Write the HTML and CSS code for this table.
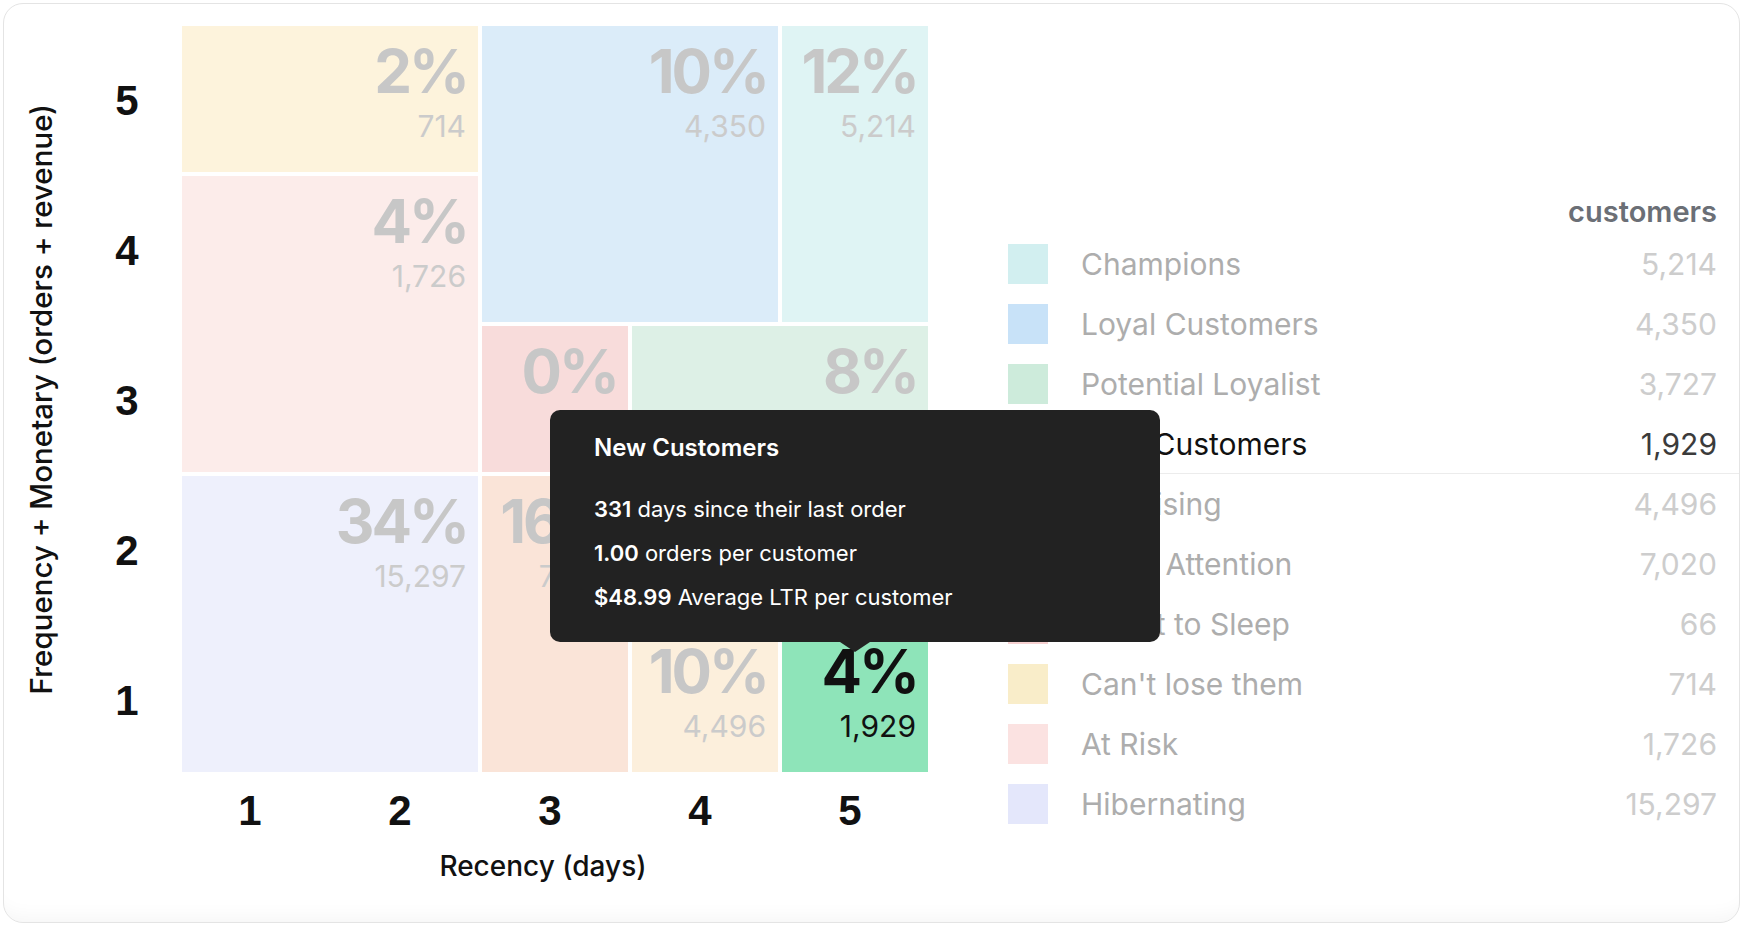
FILE: index.html
```html
<!DOCTYPE html>
<html lang="en">
<head>
<meta charset="utf-8">
<title>RFM Segments</title>
<link rel="stylesheet" href="styles.css">
</head>
<body>
<div class="card">
  <div class="chart">
    <div class="y-title"><span>Frequency + Monetary (orders + revenue)</span></div>
    <div class="y-ticks">
      <div class="tick">5</div>
      <div class="tick">4</div>
      <div class="tick">3</div>
      <div class="tick">2</div>
      <div class="tick">1</div>
    </div>
    <div class="plot">
      <div class="cell c-cant"><div class="pct">2%</div><div class="cnt">714</div></div>
      <div class="cell c-risk"><div class="pct">4%</div><div class="cnt">1,726</div></div>
      <div class="cell c-hib"><div class="pct">34%</div><div class="cnt">15,297</div></div>
      <div class="cell c-loyal"><div class="pct">10%</div><div class="cnt">4,350</div></div>
      <div class="cell c-champ"><div class="pct">12%</div><div class="cnt">5,214</div></div>
      <div class="cell c-sleep"><div class="pct">0%</div><div class="cnt">66</div></div>
      <div class="cell c-pot"><div class="pct">8%</div><div class="cnt">3,727</div></div>
      <div class="cell c-need"><div class="pct">16%</div><div class="cnt">7,020</div></div>
      <div class="cell c-prom"><div class="pct">10%</div><div class="cnt">4,496</div></div>
      <div class="cell c-new active"><div class="pct">4%</div><div class="cnt">1,929</div></div>
      <div class="tooltip">
        <div class="tt-title">New Customers</div>
        <div class="tt-line"><b>331</b> days since their last order</div>
        <div class="tt-line"><b>1.00</b> orders per customer</div>
        <div class="tt-line"><b>$48.99</b> Average LTR per customer</div>
      </div>
    </div>
    <div class="x-ticks">
      <div class="tick">1</div>
      <div class="tick">2</div>
      <div class="tick">3</div>
      <div class="tick">4</div>
      <div class="tick">5</div>
    </div>
    <div class="x-title">Recency (days)</div>
  </div>
  <div class="legend">
    <div class="legend-head">customers</div>
    <div class="row"><span class="sw s-champ"></span><span class="name">Champions</span><span class="val">5,214</span></div>
    <div class="row"><span class="sw s-loyal"></span><span class="name">Loyal Customers</span><span class="val">4,350</span></div>
    <div class="row"><span class="sw s-pot"></span><span class="name">Potential Loyalist</span><span class="val">3,727</span></div>
    <div class="row active"><span class="sw s-new"></span><span class="name">New Customers</span><span class="val">1,929</span></div>
    <div class="row"><span class="sw s-prom"></span><span class="name">Promising</span><span class="val">4,496</span></div>
    <div class="row"><span class="sw s-need"></span><span class="name">Need Attention</span><span class="val">7,020</span></div>
    <div class="row"><span class="sw s-sleep"></span><span class="name">About to Sleep</span><span class="val">66</span></div>
    <div class="row"><span class="sw s-cant"></span><span class="name">Can't lose them</span><span class="val">714</span></div>
    <div class="row"><span class="sw s-risk"></span><span class="name">At Risk</span><span class="val">1,726</span></div>
    <div class="row"><span class="sw s-hib"></span><span class="name">Hibernating</span><span class="val">15,297</span></div>
  </div>
</div>
</body>
</html>
```

FILE: styles.css
```css
html, body {
  margin: 0;
  padding: 0;
  background: #ffffff;
}

body {
  font-family: "Inter", "Liberation Sans", sans-serif;
  color: #111111;
}

.card {
  margin: 3px;
  width: 1737px;
  height: 920px;
  box-sizing: border-box;
  border: 1px solid #e4e4e4;
  border-radius: 20px;
  display: flex;
  align-items: flex-start;
  overflow: hidden;
  box-shadow: inset 0 -22px 20px -18px rgba(0, 0, 0, 0.045);
}

/* ---------- chart ---------- */
.chart {
  display: grid;
  grid-template-columns: 74px 104px 746px;
  grid-template-rows: 746px auto auto;
  align-content: start;
  padding-top: 22px;
  flex: none;
}

.y-title {
  grid-column: 1;
  grid-row: 1;
  display: flex;
  align-items: center;
  justify-content: center;
}

.y-title span {
  writing-mode: vertical-rl;
  transform: rotate(180deg);
  font-size: 29.5px;
  font-weight: 500;
  line-height: 34px;
  white-space: nowrap;
  color: #111;
}

.y-ticks {
  grid-column: 2;
  grid-row: 1;
  display: grid;
  grid-template-rows: repeat(5, 146px);
  row-gap: 4px;
}

.tick {
  font-family: "Liberation Sans", Arial, sans-serif;
  font-weight: 700;
  font-size: 42px;
  line-height: 42px;
  color: #111;
  display: flex;
  align-items: center;
  justify-content: center;
}

.y-ticks .tick {
  padding-right: 6px;
  padding-top: 4px;
}

.plot {
  grid-column: 3;
  grid-row: 1;
  position: relative;
  display: grid;
  grid-template-columns: repeat(5, 146px);
  grid-template-rows: repeat(5, 146px);
  gap: 4px;
}

.cell {
  text-align: right;
  padding: 15px 12px 0 0;
  box-sizing: border-box;
}

.pct {
  font-size: 60px;
  line-height: 60px;
  font-weight: 700;
  letter-spacing: -3px;
  margin-right: -1px;
  color: #c7c7c7;
}

.cnt {
  margin-top: 10px;
  font-size: 30px;
  line-height: 30px;
  font-weight: 400;
  color: #cbcbcb;
}

.active .pct,
.active .cnt {
  color: #111111;
}

.c-cant  { grid-column: 1 / 3; grid-row: 1 / 2; background: #fdf3dc; }
.c-risk  { grid-column: 1 / 3; grid-row: 2 / 4; background: #fcecea; }
.c-hib   { grid-column: 1 / 3; grid-row: 4 / 6; background: #eef0fc; }
.c-loyal { grid-column: 3 / 5; grid-row: 1 / 3; background: #dbecf9; }
.c-champ { grid-column: 5 / 6; grid-row: 1 / 3; background: #dff4f4; }
.c-sleep { grid-column: 3 / 4; grid-row: 3 / 4; background: #f8dcdb; }
.c-pot   { grid-column: 4 / 6; grid-row: 3 / 5; background: #ddf0e6; }
.c-need  { grid-column: 3 / 4; grid-row: 4 / 6; background: #fae4d8; }
.c-prom  { grid-column: 4 / 5; grid-row: 5 / 6; background: #fcefdc; }
.c-new   { grid-column: 5 / 6; grid-row: 5 / 6; background: #8ee4b9; }

/* ---------- tooltip ---------- */
.tooltip {
  position: absolute;
  left: 368px;
  top: 384px;
  width: 610px;
  height: 232px;
  box-sizing: border-box;
  padding: 23px 20px 0 44px;
  background: #222222;
  border-radius: 10px;
  color: #ffffff;
}

.tooltip::after {
  content: "";
  position: absolute;
  left: 290px;
  bottom: -10px;
  width: 0;
  height: 0;
  border-left: 15px solid transparent;
  border-right: 15px solid transparent;
  border-top: 10px solid #222222;
}

.tt-title {
  font-size: 24px;
  line-height: 30px;
  font-weight: 600;
  margin-bottom: 24px;
}

.tt-line {
  font-size: 22px;
  line-height: 44px;
  font-weight: 400;
  white-space: nowrap;
}

.tt-line b {
  font-weight: 600;
}

/* ---------- axes ---------- */
.x-ticks {
  grid-column: 3;
  grid-row: 2;
  display: grid;
  grid-template-columns: repeat(5, 146px);
  column-gap: 4px;
  margin-top: 18px;
}

.x-ticks .tick {
  padding-right: 10px;
}

.x-title {
  grid-column: 3;
  grid-row: 3;
  margin-top: 17px;
  padding-right: 24px;
  text-align: center;
  font-size: 28px;
  line-height: 34px;
  font-weight: 500;
  color: #111;
}

/* ---------- legend ---------- */
.legend {
  flex: 1;
  margin-left: 80px;
  padding-top: 185px;
}

.legend-head {
  text-align: right;
  padding-right: 22px;
  font-size: 29px;
  line-height: 45px;
  font-weight: 600;
  color: #6b6f76;
}

.row {
  height: 60px;
  display: flex;
  align-items: center;
  box-sizing: border-box;
}

.row.active {
  border-bottom: 1px solid #ececec;
}

.sw {
  width: 40px;
  height: 40px;
  flex: none;
}

.name {
  margin-left: 33px;
  flex: 1;
  font-size: 30px;
  line-height: 30px;
  color: #adadad;
}

.val {
  padding-right: 22px;
  font-size: 30px;
  line-height: 30px;
  color: #cdcdcd;
}

.row.active .name { color: #111111; }
.row.active .val  { color: #3b3b3b; }

.s-champ { background: #d2eff0; }
.s-loyal { background: #c8e2f8; }
.s-pot   { background: #cdebdb; }
.s-new   { background: #8ee4b9; }
.s-prom  { background: #fbe9cf; }
.s-need  { background: #f9dccc; }
.s-sleep { background: #f6d1d1; }
.s-cant  { background: #f9edc9; }
.s-risk  { background: #fbe2e1; }
.s-hib   { background: #e4e7fb; }
```
